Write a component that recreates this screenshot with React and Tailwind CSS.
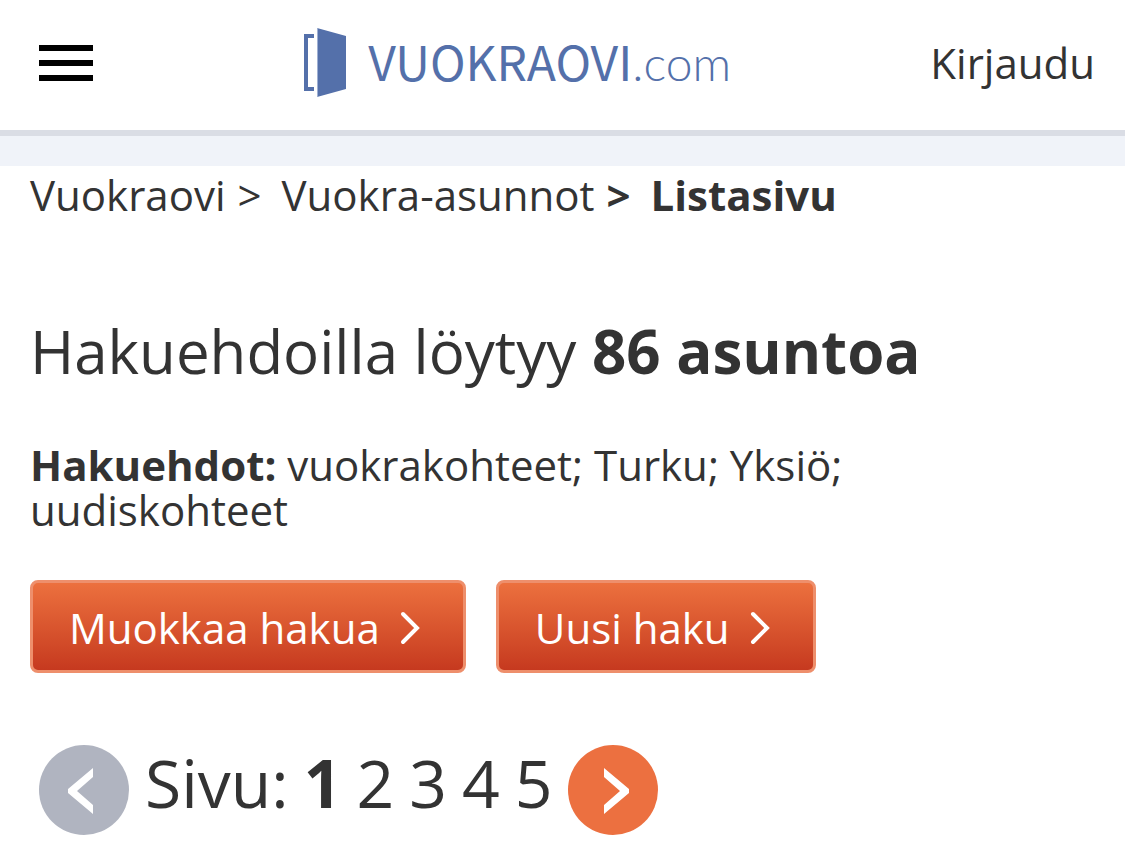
import React from 'react';

const pages = [1, 2, 3, 4, 5];

function Logo() {
    return (
        <a href="#" aria-label="Vuokraovi.com" className="flex items-center pl-3 text-[#5470aa]">
            <svg viewBox="0 0 44 70" className="w-11 h-[70px]" fill="currentColor" aria-hidden="true">
                <path d="M0 6H10V10H4V59H10V63H0Z" />
                <path d="M13 0L42 8V61L13 69Z" />
                <path d="M13 0H14V69H13Z" fill="#9fb0d3" />
            </svg>
            <span className="flex items-baseline pb-1 pl-5 leading-[70px]">
                <span className="font-['Noto_Sans_CJK_JP',sans-serif] text-[48px]">VUOKRAOVI</span>
                <span className="font-['Lato',sans-serif] text-[48px] font-light">.com</span>
            </span>
        </a>
    );
}

function SearchButton({ children }) {
    return (
        <button
            type="button"
            className="flex items-center gap-5 h-[93px] pt-0.5 pl-9 pr-[43px] rounded-lg border-3 border-[#ee8f6c] bg-linear-to-b from-[#ec703e] to-[#c6391f] text-[42px] text-white"
        >
            {children}
            <svg viewBox="0 0 20 34" className="w-5 h-[34px]" fill="none" stroke="currentColor" strokeWidth="4" strokeLinecap="round" aria-hidden="true">
                <path d="M3 3L17 17L3 31" />
            </svg>
        </button>
    );
}

export default function App() {
    return (
        <div className="bg-white text-[#333333] font-['Open_Sans',sans-serif] text-[42px] leading-[45px]">
            <header className="flex items-center justify-between h-34 pb-1 pl-[39px] pr-[30px] border-b-6 border-[#dadde5]">
                <button type="button" aria-label="Valikko" className="flex flex-col gap-[9px] w-[54px]">
                    <span className="h-[6px] w-full bg-black" />
                    <span className="h-[6px] w-full bg-black" />
                    <span className="h-[6px] w-full bg-black" />
                </button>
                <Logo />
                <a href="#" className="pb-0.5">Kirjaudu</a>
            </header>
            <div className="h-[30px] bg-[#f0f3f9]" />

            <main className="px-[30px]">
                <nav aria-label="Murupolku" className="flex gap-3 pt-1.5">
                    <a href="#">Vuokraovi</a>
                    <span className="pr-2">&gt;</span>
                    <a href="#">Vuokra-asunnot</a>
                    <span className="pr-2 font-bold">&gt;</span>
                    <span className="font-bold">Listasivu</span>
                </nav>

                <h1 className="pt-[94px] text-[60px] leading-[80px]">
                    Hakuehdoilla löytyy <strong>86 asuntoa</strong>
                </h1>

                <p className="pt-[51px] max-w-[900px]">
                    <strong>Hakuehdot:</strong> vuokrakohteet; Turku; Yksiö; uudiskohteet
                </p>

                <div className="flex gap-[30px] pt-12">
                    <SearchButton>Muokkaa hakua</SearchButton>
                    <SearchButton>Uusi haku</SearchButton>
                </div>

                <nav aria-label="Sivutus" className="flex items-center gap-4 pt-16 pl-[9px] text-[66px] leading-[90px]">
                    <button type="button" aria-label="Edellinen" disabled className="size-[90px] rounded-full bg-[#b0b4c0] text-white">
                        <svg viewBox="0 0 90 90" fill="currentColor" aria-hidden="true">
                            <path d="M54 23V32L38 46L54 60V69L29 48V44Z" />
                        </svg>
                    </button>
                    <div className="flex gap-[15px] pb-4">
                        <span>Sivu:</span>
                        {pages.map((page) => (
                            <a key={page} href="#" className={page === 1 ? 'font-bold' : ''}>{page}</a>
                        ))}
                    </div>
                    <button type="button" aria-label="Seuraava" className="size-[90px] rounded-full bg-[#ec7040] text-white">
                        <svg viewBox="0 0 90 90" fill="currentColor" aria-hidden="true">
                            <path d="M36 23V32L52 46L36 60V69L61 48V44Z" />
                        </svg>
                    </button>
                </nav>
            </main>
        </div>
    );
}
